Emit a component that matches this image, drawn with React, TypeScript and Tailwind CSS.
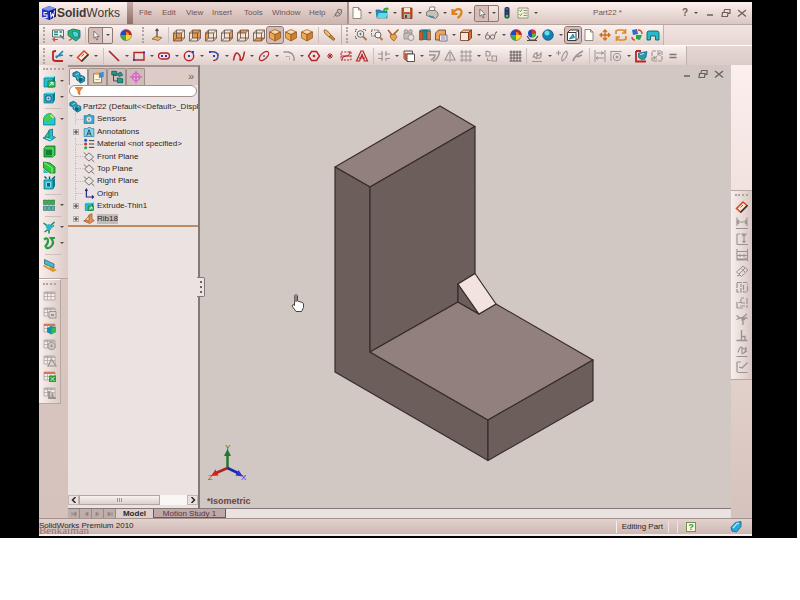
import { Fragment } from 'react'
import type { ReactNode } from 'react'

// wireframe cube, face picks which side gets filled
function Cube({ face }: { face: 'front' | 'back' | 'left' | 'right' | 'top' | 'bottom' }) {
  const fills = {
    front: 'M2.500 6h8v8h-8z',
    back: 'M5.500 3h8v8h-8z',
    left: 'M2.500 6l3-3v8l-3 3z',
    right: 'M10.500 6l3-3v8l-3 3z',
    top: 'M2.500 6l3-3h8l-3 3z',
    bottom: 'M2.500 14l3-3h8l-3 3z'
  }
  return (
    <g>
      <path d="M2.500 6l3-3h8v8l-3 3h-8z" fill="#f5e2d2" />
      <path d={fills[face]} fill="#e8964a" />
      <path
        d="M2.500 6h8v8h-8zM5.500 3h8v8h-8zM2.500 6l3-3M10.500 6l3-3M10.500 14l3-3M2.500 14l3-3"
        fill="none"
        stroke="#5b4d44"
        strokeWidth=".8"
      />
    </g>
  )
}

function OrangeBox() {
  return (
    <g stroke="#8a5420" strokeWidth=".7">
      <path d="M2.500 5L8 2.500 13.500 5 8 7.500z" fill="#fbd9a4" />
      <path d="M2.500 5L8 7.500V14l-5.500-3z" fill="#f0a850" />
      <path d="M13.500 5L8 7.500V14l5.500-3z" fill="#cf7f30" />
    </g>
  )
}

function Wheel() {
  return (
    <g>
      <path d="M8 8V2.500A5.500 5.500 0 0 1 13.500 8z" fill="#f08a1c" />
      <path d="M8 8h5.500A5.500 5.500 0 0 1 8 13.500z" fill="#f3df2a" />
      <path d="M8 8v5.500A5.500 5.500 0 0 1 2.500 8z" fill="#2fb54a" />
      <path d="M8 8H2.500A5.500 5.500 0 0 1 8 2.500z" fill="#2347c9" />
      <path d="M8 2.500A5.500 5.500 0 0 1 13.500 8H11A3 3 0 0 0 8 5z" fill="#c8202c" />
      <circle cx="8" cy="8" r="5.500" fill="none" stroke="#4c4a5a" strokeWidth=".5" />
    </g>
  )
}

function Part() {
  return (
    <g stroke="#0b4a5c" strokeWidth=".8">
      <path d="M1 3.500L5.500 1.500 9 3.500v2l5.500 2.500v4.500L10 15l-5-4V8.500L1 7z" fill="#1f9dbb" />
      <path d="M4 5.500l4-1.500M8.500 9.500l4-1.500M5.500 8l2 2v3" fill="none" stroke="#bdf2f7" />
      <circle cx="9.500" cy="11" r="1.800" fill="#15647d" />
    </g>
  )
}

function Grid({ accent }: { accent?: string }) {
  return (
    <g>
      <path d="M2 4h11v8H2z" fill="#f3ebe8" stroke="#a8a09d" strokeWidth=".8" />
      <path d="M2 4h11v2H2z" fill={accent ?? '#bcb3b0'} />
      <path d="M2 8.500h11M5.500 4v8M9 4v8" fill="none" stroke="#a8a09d" strokeWidth=".7" />
    </g>
  )
}

function Block({ children }: { children?: ReactNode }) {
  return (
    <g>
      <path d="M3 5l2-2h9l-2 2z" fill="#8df0ee" />
      <path d="M12 5l2-2v8l-2 3z" fill="#0f7a92" />
      <path d="M3 5h9v9H3z" fill="#24bfd0" stroke="#0c6f85" strokeWidth=".7" />
      {children}
    </g>
  )
}

const G = '#9b9390'
const R = '#b3242b'

const icons: Record<string, ReactNode> = {
  newDoc: <path d="M4 2.500h5.500L12 5v8.500H4zM9.500 2.500V5H12" fill="#fffdf6" stroke="#77706b" strokeWidth=".8" />,
  open: (
    <g>
      <path d="M2 5h4l1 1h6v7H3z" fill="#1a8fc4" stroke="#0d5a82" strokeWidth=".6" />
      <path d="M4.500 8H14l-2 5H3z" fill="#59dbe8" />
      <path d="M9 5q1-3 4-2l-.5-1.500L15 4l-3 2 .4-1.500q-2 0-2 2z" fill="#35a932" />
    </g>
  ),
  save: (
    <g>
      <path d="M3 3h10v10.500H3z" fill="#c2572b" stroke="#743016" strokeWidth=".8" />
      <path d="M5 3h6v4H5z" fill="#f6e4da" />
      <path d="M5 9h6v4.500H5z" fill="#a9b4bd" />
      <path d="M6 10h2v3H6z" fill="#4f4744" />
    </g>
  ),
  print: (
    <g stroke="#6f6763" strokeWidth=".8">
      <path d="M5 6l1-4h5l-1 4z" fill="#fff" />
      <path d="M2.500 7l3-1.500h6L14 8v3l-2.500 2.500-9-3z" fill="#c7c0bc" />
      <path d="M5 11l5 1.500" stroke="#3186a8" strokeWidth="1.500" />
    </g>
  ),
  undo: <path d="M3.500 4v5h5M4 8.500C7 2.500 13 3 12.500 7.500Q12 11 8.500 13" fill="none" stroke="#d98222" strokeWidth="2.200" />,
  cursor: <path d="M6 2.500v9l2.200-2 1.300 4 1.500-.6-1.500-3.700h3z" fill="#fff" stroke="#4e4542" strokeWidth=".8" />,
  traffic: (
    <g>
      <rect x="5.500" y="2" width="5" height="11.500" rx="2" fill="#25304c" />
      <circle cx="8" cy="4" r="1.300" fill="#4554d8" />
      <circle cx="8" cy="7.500" r="1.200" fill="#314b8f" />
      <circle cx="8" cy="11" r="1.500" fill="#40d152" />
    </g>
  ),
  options: (
    <g>
      <path d="M3 3h10v10H3z" fill="#f7f0d6" stroke="#7b8a62" strokeWidth=".8" />
      <path d="M4.500 5.500l1 1 1.500-2M4.500 9.500l1 1 1.500-2" fill="none" stroke="#30a03b" />
      <path d="M8.500 5.500H12M8.500 8H12M8.500 10.500H12" stroke="#777" strokeWidth=".8" />
    </g>
  ),
  pin: (
    <g stroke="#5d5350" strokeWidth="1.200">
      <path d="M8 2l6 1-1 6-3 3.500-5 .5L3 10l3-2z" fill="#c9bdb9" />
      <path d="M5 10.500L1.500 14M7 7q3 0 4 3" fill="none" />
    </g>
  ),
  sketchList: (
    <g>
      <path d="M2.500 3h11v7h-11z" fill="#ecf2ee" stroke="#456066" strokeWidth=".9" />
      <path d="M4 5h4M4 7.500h4M9.500 5H12" stroke="#238b75" strokeWidth="1.300" />
      <path d="M10 8l4 4" fill="none" stroke="#4f6f73" strokeWidth="1.200" />
      <path d="M3 12.500h5M5 10.500l-2 2 2 2" fill="none" stroke="#d54b36" strokeWidth="1.200" />
    </g>
  ),
  sketchPart: (
    <g>
      <path d="M2 4l5-2 7 1.500v7L10 14 2 8.500z" fill="#23b768" stroke="#126377" strokeWidth=".8" />
      <path d="M6 5l3-1 3.500 2v4H8z" fill="#4fd6dd" stroke="#126377" strokeWidth=".6" />
      <path d="M3 13.500l3-2" stroke="#d54b36" strokeWidth="1.500" />
    </g>
  ),
  wheel: <Wheel />,
  normal: (
    <g>
      <path d="M8 2v8M6.500 4L8 2l1.500 2" fill="none" stroke="#4e4542" strokeWidth="1.200" />
      <path d="M3 12l3.500-2.500 6.500 1-3.500 3z" fill="#e9b06f" stroke="#8d6031" strokeWidth=".8" />
    </g>
  ),
  cFront: <Cube face="front" />,
  cBack: <Cube face="back" />,
  cLeft: <Cube face="left" />,
  cRight: <Cube face="right" />,
  cTop: <Cube face="top" />,
  cBottom: <Cube face="bottom" />,
  iso: <OrangeBox />,
  brush: (
    <g stroke="#7e5929" strokeWidth=".8">
      <path d="M3 3q2-.5 3.500 1L10 8l-2 2-4-3.500Q3 5 3 3z" fill="#f1b963" />
      <path d="M8 10l2-2 4 4-1.500 1.500z" fill="#c98a33" />
    </g>
  ),
  zoomFit: (
    <g fill="none" stroke="#6b6361">
      <circle cx="7.500" cy="7" r="3.300" fill="#f5f5f5" />
      <path d="M2.500 5V2.500H5M10 2.500h2.500V5M2.500 9v2.500H5" strokeDasharray="1.500 1" />
      <path d="M10 9.500l3.500 3.500" stroke="#b97934" strokeWidth="2" />
      <path d="M6 7h3M7.500 5.500v3" strokeWidth=".8" />
    </g>
  ),
  zoomArea: (
    <g fill="none" stroke="#6b6361">
      <path d="M2.500 3h7.500v6H2.500z" strokeDasharray="1.500 1" />
      <circle cx="9" cy="8" r="3" fill="#f5f5f5" />
      <path d="M11 10.500l2.500 2.500" stroke="#b97934" strokeWidth="2" />
    </g>
  ),
  prevView: (
    <g>
      <path d="M3 3l4 5M8 8l5.500-5.500" fill="none" stroke="#a85c25" strokeWidth="1.500" />
      <path d="M5 8l5-1 2 3-3 4Q5 12 5 8z" fill="#efa14b" stroke="#8d5a29" strokeWidth=".7" />
    </g>
  ),
  camera: (
    <g fill="#c7bebb" stroke={G}>
      <path d="M3 6h8v6H3z" />
      <circle cx="5" cy="4.500" r="1.800" />
      <circle cx="9.500" cy="4.500" r="1.800" />
      <circle cx="10" cy="10.500" r="3" fill="#e7dfdc" />
    </g>
  ),
  section: (
    <g>
      <path d="M2.500 4H6v9H2.500z" fill="#c0602b" stroke="#5d3823" strokeWidth=".6" />
      <path d="M6 3h4v10H6z" fill="#1b8aa2" />
      <path d="M10 4h3.500v9H10z" fill="#d5773b" stroke="#5d3823" strokeWidth=".6" />
      <path d="M2.500 4l1.500-1h9.500" fill="none" stroke="#0b5364" />
    </g>
  ),
  viewOrient: (
    <g>
      <path d="M2.500 6l3-3h7v7l-3 3h-7z" fill="#eda55c" stroke="#4d433d" strokeWidth=".8" />
      <path d="M6.500 8H14v6H6.500z" fill="#f7efe9" stroke="#555d88" strokeWidth=".8" />
      <path d="M8 10h4.500M8 12h4.500" stroke="#555d88" strokeWidth=".7" />
    </g>
  ),
  displayStyle: (
    <g stroke="#6a3418" strokeWidth=".8">
      <path d="M2.500 5.500h8v8h-8z" fill="#f7e7dc" />
      <path d="M2.500 5.500L5.500 3h8l-3 2.500z" fill="#f9c399" />
      <path d="M10.500 5.500l3-2.500v8l-3 2.500z" fill="#dd6b2e" />
    </g>
  ),
  glasses: (
    <g fill="none" stroke="#77706d">
      <circle cx="4.500" cy="10" r="2.200" />
      <circle cx="9.500" cy="10" r="2.200" />
      <path d="M3 8l2-3M11.500 9L13 5q1-1 .5 1M6.500 9.500h1" />
    </g>
  ),
  scene: (
    <g>
      <circle cx="8" cy="6.500" r="4" fill="#2347c9" />
      <path d="M8 2.500a4 4 0 0 1 4 4H8z" fill="#e03424" />
      <path d="M8 6.500h4a4 4 0 0 1-4 4z" fill="#48bf3c" />
      <path d="M3 9l3 4h5l3-4M3 13.500h10" fill="none" stroke="#4c4644" strokeWidth="1.200" />
    </g>
  ),
  sphere: (
    <g>
      <circle cx="8" cy="8" r="5.300" fill="#1481b3" stroke="#0a4a73" strokeWidth=".7" />
      <circle cx="7" cy="6" r="2.500" fill="#68dbed" />
    </g>
  ),
  viewport: (
    <g>
      <path d="M2.500 5.500L5 3h8.500v8L11 13.500H2.500z" fill="#fff" stroke="#37383d" />
      <path d="M2.500 5.500H11v8M11 5.500L13.500 3" fill="none" stroke="#37383d" />
      <path d="M4.500 12L8 7l1.500 3.500z" fill="#26b9cf" stroke="#15768a" strokeWidth=".8" />
    </g>
  ),
  move: <path d="M8 3v10M3 8h10M6 5l2-2 2 2M6 11l2 2 2-2M5 6L3 8l2 2M11 6l2 2-2 2" fill="none" stroke="#cf6c1d" strokeWidth="1.300" />,
  rotate: <path d="M3 7V4l2-1h5l2 2M12.500 2v4H9M13 9v3l-2 1H6l-2-2M3.500 14v-4H7" fill="none" stroke="#dc8b2b" strokeWidth="1.700" />,
  swap: (
    <g>
      <path d="M3 3l5-1 1 5-5 1z" fill="#2b70c4" />
      <path d="M7 8l6 0-2 5-4-1z" fill="#2ca548" />
      <path d="M9 3q4 0 4 4M3 10q0 3 3 3" fill="none" stroke="#dd4b29" strokeWidth="1.500" />
    </g>
  ),
  arch: <path d="M2 13V6q0-2 2-2h8q2 0 2 2v7h-3.500V9h-5v4z" fill="#26b9cf" stroke="#0d6b50" strokeWidth=".9" />,
  sketch: (
    <g fill="none">
      <path d="M3 3v8q0 2 3 2h7M3 3.500l3-.5" stroke="#bb2622" strokeWidth="1.800" />
      <path d="M6 10l7-7M5.500 8.500L13 7" stroke="#2286ad" strokeWidth="1.700" />
    </g>
  ),
  dimension: (
    <g>
      <path d="M2.500 9.500L9 3l4 3.500-6.500 6.500z" fill="#fbe9dc" stroke="#d4441f" strokeWidth="1.500" />
      <path d="M6.500 13.500L13.500 6.500" stroke="#37302d" strokeWidth="1.500" />
      <path d="M6.500 8.500L9 6" stroke="#d4441f" />
    </g>
  ),
  line: <path d="M3 3l10 10" stroke={R} strokeWidth="1.700" />,
  rect: (
    <g>
      <path d="M3 4.500h10v7.500H3z" fill="none" stroke={R} strokeWidth="1.400" />
      <path d="M2 11h2v2H2zM12 3.500h2v2h-2z" fill="#2b3fc0" />
    </g>
  ),
  slot: (
    <g>
      <rect x="2.500" y="5" width="11" height="6" rx="3" fill="none" stroke={R} strokeWidth="1.300" />
      <path d="M5 7h2v2H5zM9 7h2v2H9z" fill="#2b3fc0" />
    </g>
  ),
  circle: (
    <g>
      <circle cx="8" cy="8" r="4.700" fill="none" stroke={R} strokeWidth="1.400" />
      <path d="M7 7h2v2H7zM11 3h2v2h-2z" fill="#2b3fc0" />
    </g>
  ),
  arc: (
    <g fill="none">
      <path d="M4 4q7-1 8 3.500Q12 12 8 12.500" stroke="#31509c" strokeWidth="1.400" />
      <path d="M3 3h2v2H3zM7 7h2v2H7z" fill="#2b3fc0" />
      <path d="M12 5v3M7 12.500h2" stroke={R} />
    </g>
  ),
  spline: <path d="M2.500 12.500Q4 3 7 5.500T9 12Q12 14 13.500 3.500" fill="none" stroke={R} strokeWidth="1.500" />,
  ellipse: (
    <g>
      <ellipse cx="8" cy="8" rx="5.800" ry="3" transform="rotate(-45 8 8)" fill="none" stroke={R} strokeWidth="1.300" />
      <path d="M7.200 7.200h1.600v1.600H7.200z" fill="#2b3fc0" />
    </g>
  ),
  fillet: (
    <g fill="none" stroke={G}>
      <path d="M2.500 4H7q5.500 1 6 6v3" strokeWidth="1.400" />
      <path d="M5 8.500h3.500V12" strokeDasharray="1.500 1" />
    </g>
  ),
  polygon: (
    <g>
      <path d="M5.500 3.500h5L13.500 8l-3 4.500h-5L2.500 8z" fill="none" stroke={R} strokeWidth="1.400" />
      <circle cx="8" cy="8" r="1.300" fill={R} />
    </g>
  ),
  point: <path d="M8 5v6M5 8h6M6 6l4 4M10 6l-4 4" stroke={R} strokeWidth="1" />,
  plane: (
    <g fill="none" stroke={R}>
      <path d="M3 4h10v8H3z" strokeDasharray="2 1.300" />
      <path d="M4 12q0-4 4-4t4-5M3 8h10" />
    </g>
  ),
  text: <path d="M2.500 13L7 3h2l4.500 10h-3L8 6.500 5.500 13zM5 10h6" fill="none" stroke={R} strokeWidth="1.200" />,
  trim: <path d="M2 6h5M9 6h5M2 10.500h5M10 10.500h4M6 3v10M10 3v5M10 10v3" fill="none" stroke={G} strokeWidth="1.100" />,
  convert: (
    <g stroke="#463f3c" strokeWidth=".9">
      <path d="M3 3h8.500v3H6v7l-3-2.500z" fill="#f3eae6" />
      <path d="M6 6h7.500v7.500H6z" fill="#fff" />
      <path d="M4.500 5v6.500" stroke="#dd4c20" strokeWidth="2.200" />
    </g>
  ),
  offset: <path d="M3 3.500h10.500Q13 10 7 13.500M3 7h6q0 3-4 5" fill="none" stroke={G} strokeWidth="1.500" />,
  mirror: <path d="M8 2v12M7 4L3 12h4M9 4l4 8H9" fill="none" stroke={G} strokeWidth="1.100" />,
  pattern: (
    <path d="M3 3h2v2H3zM7 3h2v2H7zM11 3h2v2h-2zM3 7h2v2H3zM7 7h2v2H7zM11 7h2v2h-2zM3 11h2v2H3zM7 11h2v2H7zM11 11h2v2h-2z" fill="#e9dfdc" stroke={G} strokeWidth=".9" />
  ),
  moveEnt: <path d="M3 3v5h4M3 3l4 1v4M9 8h4.500v5H9zM4.500 10v2.500h3" fill="none" stroke={G} strokeWidth="1.100" />,
  gridLines: <path d="M4 2.500v11M7 2.500v11M10 2.500v11M13 2.500v11M2.500 4h12M2.500 7h12M2.500 10h12M2.500 13h12" fill="none" stroke="#5b5350" strokeWidth=".9" />,
  relations: <path d="M3 13.500h10M8 11V4M8 11L4.500 8M4 9.500Q6 3 8 6t4-1q1 5-3 5.500" fill="none" stroke={G} strokeWidth="1.200" />,
  repair: <path d="M2 5h5M4.500 2.500v5M8 13q-1-3 1.500-7T13 4q1 3-1.500 6T8 13" fill="none" stroke={G} strokeWidth="1.100" />,
  tangent: <path d="M3 13Q5 7 13 3M7 9l5-2" fill="none" stroke={G} strokeWidth="1.800" />,
  hdim: <path d="M3 2v12M13 2v12M4 5h8M4 10h8M9 3.500L11.500 5 9 6.500M6 8.500L4 10l2 1.500" fill="none" stroke={G} strokeWidth="1" />,
  holeDim: (
    <g fill="none" stroke={G}>
      <path d="M2.500 3.500h11M3 3v10" />
      <circle cx="9" cy="9" r="3.700" />
      <circle cx="9" cy="9" r="1" fill={G} />
    </g>
  ),
  rapid: (
    <g>
      <path d="M3 3v10.500h10M3 3h5" fill="none" stroke="#bb2622" strokeWidth="1.800" />
      <path d="M5.500 5L14 3.500l-1 6-4 2.500-3.500-2.500z" fill="#2593bf" stroke="#0d557a" strokeWidth=".6" />
      <path d="M7 9l5 2.500" stroke="#35a35f" strokeWidth="1.500" />
      <path d="M7 6.500l4-1" stroke="#b7ecf7" />
    </g>
  ),
  sketchPic: <path d="M3 3h10v10H3zM5 11l6-6M8 5h3v3M5 8v3h3" fill="none" stroke={G} strokeDasharray="4 1" strokeWidth="1.100" />,
  equals: <path d="M4.500 6.500h7M4.500 9.500h7" stroke="#7d7471" strokeWidth="1.300" />,
  extrude: (
    <Block>
      <path d="M7 8h7v6H7z" fill="#2fc95c" stroke="#12703b" strokeWidth=".8" />
      <path d="M8.500 12.500l3.500-3M9.500 9.500H12V12" fill="none" stroke="#e5fff0" />
    </Block>
  ),
  cut: (
    <Block>
      <path d="M5 7h5v5H5z" fill="#e8fbff" stroke="#0b4f7b" />
      <path d="M6.500 8.500h2v2h-2z" fill="#2a5eb8" />
    </Block>
  ),
  filletF: (
    <g>
      <path d="M2.500 14V8q1-5.500 7.500-5.500L14 7v7z" fill="#24c4d2" stroke="#0c6f85" strokeWidth=".7" />
      <path d="M2.500 9q.5-6.500 7.500-6.500L13 6q-5 1-5 6z" fill="#3ed34a" />
      <path d="M9.500 4l3 3" stroke="#f5e658" strokeWidth="1.500" />
    </g>
  ),
  rib: (
    <g stroke="#0c6f85" strokeWidth=".8">
      <path d="M8 3l3.500-1v7l3 1.500L9 14l-7-3 5-2z" fill="#24bfd0" />
      <path d="M8 4l-4 5.500L8 11z" fill="#3bcf64" />
      <path d="M5 11l5 2" stroke="#c7fbf7" />
    </g>
  ),
  shell: (
    <g>
      <path d="M3 5l2-2h9v9l-2 2H3z" fill="#26b83c" stroke="#0e6d2b" strokeWidth=".8" />
      <path d="M5 7h6v5H5z" fill="#137f38" />
      <path d="M3 5h9v9" fill="none" stroke="#79ef7d" strokeWidth=".8" />
    </g>
  ),
  draft: (
    <g>
      <path d="M2.500 3l6.500 1 5 4v6H9L2.500 9z" fill="#2fc939" stroke="#0e6d2b" strokeWidth=".8" />
      <path d="M3 3.500L11 9v5" fill="none" stroke="#8cf48b" />
      <path d="M2.500 10l5 4h-5z" fill="#22b9cf" />
    </g>
  ),
  wizard: (
    <Block>
      <path d="M3.500 1.500l2 2M8.500 1.500v3M14 1.500l-3 3" stroke="#2b3f5e" strokeWidth="1.300" />
      <path d="M5.500 7.500h4V12h-4z" fill="#0d6280" stroke="#9ff0f0" strokeWidth=".8" />
    </Block>
  ),
  linear: (
    <g stroke="#165b35" strokeWidth=".5">
      <path d="M2.500 3h3v4.500h-3zM6.500 3h3v4.500h-3zM10.500 3h3v4.500h-3z" fill="#37b646" />
      <path d="M2.500 9h3v4.500h-3zM6.500 9h3v4.500h-3zM10.500 9h3v4.500h-3z" fill="#58b5c8" />
    </g>
  ),
  refGeom: (
    <g>
      <path d="M2.500 4L8 8l5.500-5M8 8v6.500M3.500 13L13 6.500" fill="none" stroke="#1a8a58" strokeWidth="1.500" />
      <path d="M4.500 6.500L8 5l4 2-2.500 4H6z" fill="#26b6cf" />
    </g>
  ),
  curves: <path d="M3 4.500Q7 2 7 5.500T4.500 11Q6 15 10 11.500T10 3h4" fill="none" stroke="#289b43" strokeWidth="2.200" />,
  instant: (
    <g>
      <path d="M3.500 2.500L13 7v4L3.500 7z" fill="#4ab8c8" stroke="#186070" strokeWidth=".7" />
      <path d="M2.500 8.500l8 4.500-.5-2 4 2-3 1.500" fill="none" stroke="#e69228" strokeWidth="1.900" />
    </g>
  ),
  table1: <Grid />,
  table2: <g><Grid /><path d="M7 7.500h7V14H7z" fill="#ddd5d2" stroke={G} /><path d="M9 10h3v2H9z" fill={G} /></g>,
  table3: <g><Grid accent="#d5754b" /><path d="M5 8l4-2 5 1v5l-5 2.500-4-2.500z" fill="#168daa" /><path d="M9.500 8.500L14 7v5l-4.500 2z" fill="#36bc4e" /></g>,
  table4: <g><Grid /><circle cx="9.500" cy="10" r="3.700" fill="#d1c9c6" stroke={G} /><path d="M8 10h3M9.500 8.500v3" stroke={G} /></g>,
  table5: <g><Grid /><path d="M6 14l3.500-6.500L14 14z" fill="#ddd5d2" stroke={G} strokeWidth="1.200" /></g>,
  table6: <g><Grid accent="#d5754b" /><path d="M7 7.500h7V14H7z" fill="#24a12c" /><path d="M8.500 9l4 4M12.500 9l-4 4" stroke="#c6f2c4" /></g>,
  table7: <g><Grid /><path d="M7 7v7h7M10.500 9v4" fill="none" stroke={G} strokeWidth="1.800" /></g>,
  r1: <path d="M3 2.500V11M13 2.500V11M3 7h10M5 5L3 7l2 2M11 5l2 2-2 2M2 13.500h12" fill="none" stroke={G} strokeWidth="1.100" />,
  r2: <path d="M3 3v10.500M3 3h3M3 13.500h11M10 3v9M7 3h6M8.500 5L10 3.500 11.500 5M8.500 10l1.500 1.500L11.500 10" fill="none" stroke={G} strokeWidth="1.100" />,
  r3: <path d="M3 2v10h10.500V2M3 4.500h10.500M3 8.500h10.500M6 7v3M10 7v3M2.500 13h9M11 11l3 3" fill="none" stroke={G} strokeWidth="1.100" />,
  r4: <path d="M2.500 9L9 3l5 4-6.500 6.500zM5 11l6-6M7.500 6L11 9M3 13l3-1" fill="none" stroke={G} />,
  r5: <path d="M3 4v9h4V5M3 3.500h10.500M9.500 6v7h4V5" fill="none" stroke={G} strokeDasharray="5 1" strokeWidth="1.200" />,
  r6: <path d="M3 13V7.500h4V3h3M3 13h6M7 8h4M13 3v10M6 11h5" fill="none" stroke={G} strokeDasharray="6 1" strokeWidth="1.200" />,
  r7: <path d="M2.500 4.500L6 7h7.500M6 7L2.500 8.500M8 7l5-4M9 7v7M7.500 9.500L9 7l2 2" fill="none" stroke={G} strokeWidth="1.300" />,
  r8: <path d="M2.500 13.500h11M7.500 3v10M7.500 9.500H11v4" fill="none" stroke={G} strokeWidth="1.400" />,
  r9: <path d="M2.500 13.500h11M8 11V5M4 9.500Q6 2 8.500 5T12 4q1 5-4 7M8 11l5-3" fill="none" stroke={G} strokeWidth="1.100" />,
  r10: <path d="M3 3v9q0 1.500 2 1.500h8.500M3 3h4M5 8l3 1 5.500-5.500" fill="none" stroke={G} strokeWidth="1.200" />,
  part: <Part />,
  propTab: (
    <g>
      <path d="M3 4h9v10.500H3z" fill="#fff6dd" stroke="#8b6a33" />
      <path d="M5 2.500h5l1 3H4z" fill="#e5a647" />
      <path d="M9 3.500L14.500 2v6L9 9z" fill="#3c8ed0" />
      <path d="M5 11h5" stroke="#b59c6c" />
    </g>
  ),
  configTab: (
    <g>
      <path d="M4 3v9.500h5M4 6h5" fill="none" stroke="#3b3b3b" />
      <path d="M2 1.500h5.500v4H2zM8.500 9l6 1v4.500h-6zM8.500 4l4-1.500 2 3.500-4 1.500z" fill="#1f9e8e" stroke="#0a4f55" strokeWidth=".8" />
    </g>
  ),
  dimTab: (
    <g fill="none" stroke="#dd5fcf">
      <circle cx="8" cy="8" r="4.300" strokeWidth="1.500" />
      <path d="M8 1v14M1 8h14" strokeWidth="1.500" />
    </g>
  ),
  funnel: <path d="M2 2.500h12L9.500 8v6L6.500 12V8z" fill="#f58b2a" stroke="#a84d12" strokeWidth=".8" />,
  folder: (
    <g>
      <path d="M1.500 3.500H6l1-1.500h3l1 1.500h3.500V14h-13z" fill="#37aad0" stroke="#17698d" strokeWidth=".8" />
      <circle cx="8" cy="8.500" r="3.700" fill="#dff6fb" stroke="#777" strokeWidth=".8" />
      <circle cx="8" cy="8.500" r="1.500" fill="#a0938e" />
    </g>
  ),
  notes: (
    <g>
      <path d="M1.500 3.500H6l1-1.500h3l1 1.500h3.500V14h-13z" fill="#7ad6ee" stroke="#17698d" strokeWidth=".8" />
      <path d="M5 13l3-8 3 8M6 10.500h4" fill="none" stroke="#444" strokeWidth="1.300" />
    </g>
  ),
  material: (
    <g>
      <circle cx="3.500" cy="3" r="2" fill="#2b49c7" />
      <circle cx="3.500" cy="8" r="2" fill="#cf2d2d" />
      <circle cx="3.500" cy="13" r="2" fill="#2ba53b" />
      <path d="M8 3.500h7M8 8h7M8 12.500h7" stroke="#3a3533" strokeWidth="1.300" />
    </g>
  ),
  planeItem: <path d="M8 2.500L14 8l-6 5.500L2 8zM1 2l4 3.500M11 11l4 3.500" fill="none" stroke="#6e6663" strokeWidth="1.200" />,
  origin: <path d="M4.500 1.500V12H14M3 4l1.500-2.500L6 4M12 10l2 2-2 2" fill="none" stroke="#242a88" strokeWidth="1.600" />,
  ribItem: (
    <g stroke="#8b4a20" strokeWidth=".9">
      <path d="M8 2.500l4-1.500v7l3 2-6 4-8-3.500L7 8z" fill="#e89252" />
      <path d="M8 3.500L3.500 9 8 11z" fill="#fbd7b0" />
    </g>
  )
}

function Icon({ name, className = 'size-4' }: { name: string; className?: string }) {
  return (
    <svg viewBox="0 0 16 16" className={`${className} shrink-0`} aria-hidden="true">
      {icons[name]}
    </svg>
  )
}

function DropArrow({ label }: { label: string }) {
  return (
    <button aria-label={`${label} options`} className="flex w-[9px] h-4 shrink-0 items-center justify-center">
      <svg viewBox="0 0 4 2" className="w-1 h-[2px]">
        <path d="M0 0h4L2 2z" fill="#5a4b47" />
      </svg>
    </button>
  )
}

// '|' is a separator, '_' a small gap, a leading '*' means pressed, a trailing '+' adds a drop-down arrow
function Tools({ items, vertical = false }: { items: string; vertical?: boolean }) {
  return (
    <>
      {items.split(' ').map((item, i) => {
        if (item === '|') {
          return vertical ? (
            <div key={i} className="flex h-[6px] w-full items-center px-1"><div className="h-px w-full bg-[#cdbfbb]" /></div>
          ) : (
            <div key={i} className="flex h-4 w-[6px] shrink-0 justify-center"><div className="h-full w-px bg-[#cdbfbb]" /></div>
          )
        }
        if (item === '_') return <div key={i} className="w-2 shrink-0" />
        const pressed = item.startsWith('*')
        const name = item.replace('*', '').replace('+', '')
        const button = (
          <button
            aria-label={name}
            className={`flex size-4 shrink-0 items-center justify-center ${
              pressed ? 'rounded-xs bg-[#d5bcb6] outline outline-[#8d7772]' : ''
            }`}
          >
            <Icon name={name} />
          </button>
        )
        return item.endsWith('+') ? (
          <div key={i} className="flex shrink-0">
            {button}
            <DropArrow label={name} />
          </div>
        ) : (
          <Fragment key={i}>{button}</Fragment>
        )
      })}
    </>
  )
}

function SelectTool() {
  return (
    <div className="flex h-[17px] shrink-0 items-center rounded-xs border border-[#8d7772]">
      <button aria-label="Select" className="h-full w-[14px] border-r border-[#8d7772] bg-[#d5bcb6]">
        <Icon name="cursor" className="h-[15px] w-[13px]" />
      </button>
      <DropArrow label="Select" />
    </div>
  )
}

function Grip() {
  return <div className="mx-1 h-4 w-[3px] shrink-0 border-l-2 border-dotted border-[#b3a39f]" />
}

function FlatGrip() {
  return <div className="mx-1 my-[3px] h-[2px] shrink-0 self-stretch border-t-2 border-dotted border-[#b3a39f]" />
}

function WindowButtons({ className = '' }: { className?: string }) {
  return (
    <div className={`flex items-center ${className}`}>
      <button aria-label="Minimize" className="w-4">
        <svg viewBox="0 0 10 10" className="mx-auto size-[10px]"><path d="M2 7h6" stroke="currentColor" strokeWidth="1.500" /></svg>
      </button>
      <button aria-label="Restore" className="w-4">
        <svg viewBox="0 0 10 10" className="mx-auto size-[10px]">
          <path d="M3.500 1.500H9v4H7.500M3.500 1.500L3 4M1.500 4.500H7L6.500 8.500H1z" fill="none" stroke="currentColor" strokeWidth="1.200" />
        </svg>
      </button>
      <button aria-label="Close" className="w-4">
        <svg viewBox="0 0 10 10" className="mx-auto size-[10px]"><path d="M1 2l8 6.500M9 2L1 8.500" stroke="currentColor" strokeWidth="1.300" /></svg>
      </button>
    </div>
  )
}

function TitleBar() {
  const menus = [
    { name: 'File', width: 'w-[23px]' },
    { name: 'Edit', width: 'w-[24px]' },
    { name: 'View', width: 'w-[26px]' },
    { name: 'Insert', width: 'w-[32px]' },
    { name: 'Tools', width: 'w-[28px]' },
    { name: 'Window', width: 'w-[37px]' },
    { name: 'Help', width: 'w-[24px]' }
  ]
  return (
    <header className="flex h-[22px] items-center bg-linear-to-b from-[#fdf0ed] to-[#d9c6c1]">
      <div className="flex w-[88px] shrink-0 items-center pl-[2px]">
        <svg viewBox="0 0 16 16" className="size-4">
          <path d="M1 4l7-3 7 2.500v8L8 15l-7-3z" fill="#2436c4" />
          <path d="M1 4l7 2 7-2.500L8 1z" fill="#7d92f0" />
          <path d="M8 6l7-2.500v8L8 15z" fill="#131d7c" />
          <path d="M6 7.500H3V10h3v2.500H2.500M9.500 7l.5 5 1.500-3 1 2.500 1-6" fill="none" stroke="#eef1ff" strokeWidth="1.100" />
        </svg>
        <span className="text-[12px] leading-4 text-[#3c3735]"><b>Solid</b>Works</span>
      </div>
      <nav className="flex h-full shrink-0 items-center border-r-2 border-[#a8918c] bg-linear-to-b from-[#ecd9d5] to-[#cbb4af] text-[#6f5653]">
        <div className="mr-[6px] h-full w-[6px] bg-linear-to-b from-[#c7a9a4] to-[#8d6f6b]" />
        {menus.map((menu) => (
          <button key={menu.name} className={`${menu.width} text-left`}>{menu.name}</button>
        ))}
        <button aria-label="Pin menu" className="flex w-[14px]"><Icon name="pin" className="size-[10px]" /></button>
      </nav>
      <div className="flex shrink-0 items-center">
        <Tools items="newDoc+ open+ save+ print+ undo+" />
        <SelectTool />
        <Tools items="traffic options+" />
      </div>
      <h1 className="flex-1 pr-1 text-center text-[#6f5653]">Part22 *</h1>
      <div className="flex shrink-0 items-center pr-[2px] text-[#6f5f5b]">
        <button aria-label="Help" className="w-3 text-[10px] font-bold">?</button>
        <DropArrow label="Help" />
        <WindowButtons className="pl-[2px]" />
      </div>
    </header>
  )
}

const bar = 'flex shrink-0 items-center border-r border-[#c3b1ac] bg-linear-to-b from-[#fbf2f0] to-[#dfcfcb]'

function Toolbars() {
  return (
    <div className="bg-linear-to-b from-[#f2e4e1] to-[#dccbc7]">
      <div className="flex h-[21px] overflow-hidden border-t border-[#b9a7a2]">
        <div className={`${bar} w-[303px]`}>
          <Grip />
          <Tools items="sketchList sketchPart |" />
          <SelectTool />
          <div className="w-[5px]" />
          <Tools items="wheel" />
          <div className="w-[4px]" />
          <Grip />
          <Tools items="normal | cFront cBack cLeft cRight cTop cBottom *iso iso iso | brush" />
        </div>
        <div className={`${bar} w-[322px]`}>
          <Grip />
          <Tools items="zoomFit zoomArea prevView camera section viewOrient+ displayStyle+ glasses+ wheel scene sphere+ *viewport newDoc move rotate swap arch" />
        </div>
      </div>
      <div className="flex h-[20px] overflow-hidden border-t border-white">
        <div className={`${bar} w-[648px]`}>
          <Grip />
          <Tools items="sketch+ dimension+ | line+ rect+ slot+ circle+ arc+ spline+ ellipse+ fillet+ polygon point plane text | trim+ convert+ offset mirror pattern+ moveEnt _ gridLines | relations+ repair tangent | hdim holeDim+ rapid sketchPic equals" />
        </div>
      </div>
    </div>
  )
}

function LeftTools() {
  return (
    <aside className="flex w-[29px] shrink-0 flex-col bg-linear-to-b from-[#dccbc6] to-[#d6c2bc]">
      <div className="flex h-[214px] flex-col items-start border-b border-[#b9a7a2] bg-linear-to-r from-[#f8efed] to-[#dccbc7]">
        <FlatGrip />
        <div className="flex flex-col items-start pl-[2px]">
          <Tools vertical items="extrude+ cut+ | filletF+ rib shell draft wizard | linear+ | refGeom+ curves+ | instant" />
        </div>
      </div>
      <div className="flex h-[125px] w-[22px] flex-col items-center border-r border-b border-[#b9a7a2] border-t border-t-white bg-linear-to-r from-[#f8efed] to-[#dccbc7]">
        <FlatGrip />
        <Tools vertical items="table1 table2 table3 table4 table5 table6 table7" />
      </div>
    </aside>
  )
}

const treeItems = [
  { label: 'Sensors', icon: 'folder' },
  { label: 'Annotations', icon: 'notes', expandable: true },
  { label: 'Material <not specified>', icon: 'material' },
  { label: 'Front Plane', icon: 'planeItem' },
  { label: 'Top Plane', icon: 'planeItem' },
  { label: 'Right Plane', icon: 'planeItem' },
  { label: 'Origin', icon: 'origin' },
  { label: 'Extrude-Thin1', icon: 'extrude', expandable: true },
  { label: 'Rib18', icon: 'ribItem', expandable: true, selected: true }
]

function FeatureTree() {
  return (
    <section className="relative z-10 flex w-[132px] shrink-0 flex-col border-t-2 border-r-2 border-t-[#a3928e] border-r-[#85787a] bg-[#ebe3e1]">
      <div className="flex h-[18px] items-end bg-[#dccbc6] pl-px">
        {['part', 'propTab', 'configTab', 'dimTab'].map((tab, i) => (
          <button
            key={tab}
            aria-label={tab}
            className={`flex h-[17px] w-[19px] items-center justify-center rounded-t-xs border border-b-0 border-[#a08f8a] ${
              i === 0 ? 'bg-[#f5eeec]' : 'bg-[#cfbdb8]'
            }`}
          >
            <Icon name={tab} className="size-[14px]" />
          </button>
        ))}
        <button aria-label="More tabs" className="ml-auto self-center pr-1 text-[11px] text-[#6f5f5b]">»</button>
      </div>
      <label className="mx-px flex h-3 items-center rounded-full border border-[#a08f8a] bg-white pl-1">
        <Icon name="funnel" className="size-[10px]" />
        <input aria-label="Filter tree" className="h-2 w-full min-w-0 bg-transparent outline-none" />
      </label>
      <div className="flex h-[130px] flex-col overflow-hidden border-b-2 border-[#c08a62] pt-[3px] whitespace-nowrap text-[#2d2625]">
        <div className="flex flex-1 items-center gap-px pl-px">
          <Icon name="part" className="size-[13px]" />
          <span>Part22 (Default&lt;&lt;Default&gt;_Displ</span>
        </div>
        <ul className="flex flex-9 flex-col">
          {treeItems.map((item) => (
            <li key={item.label} className="flex flex-1 items-center pl-[5px]">
              <div className="flex h-full w-[10px] items-center">
                {item.expandable ? (
                  <button aria-label={`Expand ${item.label}`} className="flex size-[6px] items-center justify-center border border-[#b8aeaa] bg-[#f4efed]">
                    <svg viewBox="0 0 4 4" className="size-1"><path d="M0 2h4M2 0v4" stroke="#333" strokeWidth="1" /></svg>
                  </button>
                ) : (
                  <div className="ml-[2px] flex h-full w-2 items-center border-l border-dotted border-[#c5bbb7]">
                    <div className="w-full border-t border-dotted border-[#c5bbb7]" />
                  </div>
                )}
              </div>
              <Icon name={item.icon} className="size-3" />
              <span className={`ml-[2px] leading-[10px] ${item.selected ? 'bg-[#c5bbb8]' : ''}`}>{item.label}</span>
            </li>
          ))}
        </ul>
      </div>
      <div className="mt-auto mb-[3px] flex h-[10px] bg-[#faf6f5] text-[#2d2625]">
        <button aria-label="Scroll left" className="flex w-[11px] items-center justify-center border border-[#c3b5b1] bg-[#ebe1de]">
          <svg viewBox="0 0 6 6" className="size-[6px]"><path d="M4.500 0l-3 3 3 3" fill="none" stroke="currentColor" strokeWidth="1.500" /></svg>
        </button>
        <div className="flex w-[81px] items-center justify-center gap-px border border-[#b5a5a1] bg-linear-to-b from-[#f8f2f0] to-[#ddd0cc]">
          <i className="h-1 w-px bg-[#a39591]" />
          <i className="h-1 w-px bg-[#a39591]" />
          <i className="h-1 w-px bg-[#a39591]" />
        </div>
        <button aria-label="Scroll right" className="ml-auto flex w-[11px] items-center justify-center border border-[#c3b5b1] bg-[#ebe1de]">
          <svg viewBox="0 0 6 6" className="size-[6px]"><path d="M1.500 0l3 3-3 3" fill="none" stroke="currentColor" strokeWidth="1.500" /></svg>
        </button>
      </div>
      <div className="absolute top-[210px] -right-[7px] flex h-[20px] w-2 flex-col items-center justify-evenly rounded-r-xs border border-l-0 border-[#85787a] bg-[#ebe3e1]">
        <i className="size-[2px] bg-[#7b5c5a]" />
        <i className="size-[2px] bg-[#7b5c5a]" />
        <i className="size-[2px] bg-[#7b5c5a]" />
      </div>
    </section>
  )
}

function ModelView() {
  return (
    <section className="relative min-w-0 flex-1 bg-[#d1c8c4]">
      <svg viewBox="200 65 531 440" preserveAspectRatio="xMinYMin meet" className="absolute inset-0 size-full">
        <g stroke="#372c2a" strokeWidth="1.200" strokeLinejoin="round">
          <path d="M335 167L440 106 475 126.500 370 187z" fill="#91807c" />
          <path d="M335 167L370 187V352L488 420V460.500L335 372z" fill="#6b5e5b" />
          <path d="M370 187L475 126.500V273.500L458 284V302L370 352z" fill="#6b5e5b" />
          <path d="M370 352L458 302 479 314 496 304 593 360 488 420z" fill="#91807c" />
          <path d="M488 420L593 360V400.500L488 460.500z" fill="#6b5e5b" />
          <path d="M458 284V302L479 314z" fill="#6b5e5b" />
          <path d="M475 273.500L458 284 479 314 496 304z" fill="#f3e3df" />
        </g>
        {/* axis triad */}
        <g strokeWidth="2.500">
          <path d="M227.500 468V454" stroke="#217a2c" />
          <path d="M227.500 468L216 473" stroke="#b3221f" />
          <path d="M227.500 468L239 473.500" stroke="#1f25a8" />
          <path d="M227.500 449l3.500 7h-7z" fill="#217a2c" />
          <path d="M211 476l4.500-6.500 3 6z" fill="#d3231f" />
          <path d="M243 476.500l-4.500-6.500-3 5.500z" fill="#2a33cc" />
        </g>
        <g fontSize="8">
          <text x="225" y="450" fill="#217a2c">Y</text>
          <text x="208" y="480" fill="#e0282b">Z</text>
          <text x="241" y="480" fill="#2c35dd">X</text>
        </g>
        {/* hand pointer */}
        <path
          d="M294.500 295.500q1.500-2 3 0V301l5 1.500 1 1.500v3.500l-2 4h-5.500l-4-5.500 1-1.500 1.500 1z"
          fill="#fff"
          stroke="#4a4341"
          strokeWidth="1"
        />
        <path d="M294.500 296q1.500-2 2.500 0v6h-2.500z" fill="#8d8583" />
      </svg>
      <WindowButtons className="absolute top-1 right-1 text-[#6b5f5c]" />
      <span className="absolute bottom-px left-[7px] text-[9px] leading-3 font-bold text-[#6a4441]">*Isometric</span>
    </section>
  )
}

function RightTools() {
  return (
    <aside className="flex w-[21px] shrink-0 flex-col bg-linear-to-b from-[#fcefed] to-[#d6c2bc]">
      <div className="mt-[125px] flex h-[190px] flex-col items-center border-y border-[#b9a7a2] bg-linear-to-r from-[#f8efed] to-[#d8c7c3]">
        <FlatGrip />
        <Tools vertical items="dimension r1 r2 r3 r4 r5 r6 r7 r8 r9 r10" />
      </div>
    </aside>
  )
}

function BottomTabs() {
  return (
    <div className="flex h-[10px] shrink-0 border-t border-[#85787a] bg-[#ebe3e1] leading-[9px]">
      <div className="flex w-[48px] bg-[#bfaeaa]">
        {['M6 1L3 3l3 2zM2 1v4', 'M6 1L3 3l3 2z', 'M2 1l3 2-3 2z', 'M2 1l3 2-3 2zM6 1v4'].map((d) => (
          <button key={d} aria-label="Scroll tabs" className="flex w-3 items-center justify-center border-r border-[#9b8985]">
            <svg viewBox="0 0 8 6" className="h-[6px] w-2"><path d={d} fill="#99857f" stroke="#99857f" strokeWidth=".8" /></svg>
          </button>
        ))}
      </div>
      <button className="w-[38px] border-r border-[#6a5a57] bg-[#ddd0cc] font-bold text-[#2d2625]">Model</button>
      <button className="w-[72px] border-r border-b border-[#6a5a57] bg-[#bfa9a5] text-[#5a2f49]">Motion Study 1</button>
    </div>
  )
}

function StatusBar() {
  return (
    <footer className="relative flex h-[18px] shrink-0 items-center border-t border-b-2 border-t-[#a3928e] border-b-[#f7eeec] bg-linear-to-b from-[#e4d2ce] to-[#cbb8b3] text-[#2d2625]">
      <span className="pb-px">SolidWorks Premium 2010</span>
      <span className="absolute top-[5px] left-0 font-['Liberation_Serif',serif] text-[11px] leading-3 text-[#9a6f6c]">Benkaiman</span>
      <div className="ml-auto flex h-3 items-center">
        <span className="border-l border-[#f7eeec] px-[5px]">Editing Part</span>
        <span className="h-3 w-[10px] border-x border-[#f0e4e1]" />
        <button aria-label="Quick tips" className="ml-2 flex size-[10px] items-center justify-center border border-[#7d8b5a] bg-[#fbf8e0] text-[9px] font-bold text-[#1c9a2e]">?</button>
        <button aria-label="Tags" className="mr-[10px] ml-[34px] size-3">
          <svg viewBox="0 0 12 12" className="size-3">
            <path d="M1 6.500L5.500 1.500 11 .5v5L6.500 11 2 10z" fill="#2ba8dc" stroke="#12618c" strokeWidth=".8" />
            <path d="M3 7l4-4.500h2" fill="none" stroke="#a4e6fa" strokeWidth="1.300" />
          </svg>
        </button>
      </div>
    </footer>
  )
}

export default function App() {
  return (
    <div className="min-h-screen bg-white pr-[3px] font-['Liberation_Sans',sans-serif] text-[8px] leading-3">
      <div className="flex h-[calc(100vh-62px)] min-h-[480px] flex-col bg-black pt-[2px] pr-[45px] pb-[2px] pl-[39px]">
        <TitleBar />
        <Toolbars />
        <main className="flex min-h-0 flex-1">
          <LeftTools />
          <div className="flex min-w-0 flex-1 flex-col">
            <div className="flex min-h-0 flex-1">
              <FeatureTree />
              <ModelView />
            </div>
            <BottomTabs />
          </div>
          <RightTools />
        </main>
        <StatusBar />
      </div>
    </div>
  )
}
